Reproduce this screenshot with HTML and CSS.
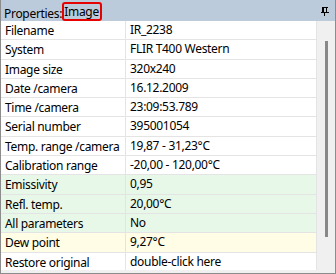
FILE: index.html
```html
<!DOCTYPE html>
<html lang="en">

<head>
    <meta charset="UTF-8">
    <title>Properties</title>
    <link rel="stylesheet" href="styles.css">
</head>

<body>
    <div class="panel">
        <div class="header">
            <span class="title">Properties:<span class="mark">Image</span></span>
            <svg class="pin" width="8" height="9" viewBox="0 0 8 9">
                <path d="M1 0h6v1H6v4H5V1H3v4H1V1H1z" fill="#000" />
                <rect x="0" y="5" width="8" height="1" fill="#000" />
                <rect x="3" y="6" width="1" height="3" fill="#000" />
            </svg>
        </div>
        <div class="content">
            <div class="grid">
                <div class="row"><span class="key">Filename</span><span class="val">IR_2238</span></div>
                <div class="row"><span class="key">System</span><span class="val">FLIR T400 Western</span></div>
                <div class="row"><span class="key">Image size</span><span class="val">320x240</span></div>
                <div class="row"><span class="key">Date /camera</span><span class="val">16.12.2009</span></div>
                <div class="row"><span class="key">Time /camera</span><span class="val">23:09:53.789</span></div>
                <div class="row"><span class="key">Serial number</span><span class="val">395001054</span></div>
                <div class="row"><span class="key">Temp. range /camera</span><span class="val">19,87 - 31,23°C</span></div>
                <div class="row"><span class="key">Calibration range</span><span class="val">-20,00 - 120,00°C</span></div>
                <div class="row green"><span class="key">Emissivity</span><span class="val">0,95</span></div>
                <div class="row green"><span class="key">Refl. temp.</span><span class="val">20,00°C</span></div>
                <div class="row green"><span class="key">All parameters</span><span class="val">No</span></div>
                <div class="row yellow"><span class="key">Dew point</span><span class="val">9,27°C</span></div>
                <div class="row"><span class="key">Restore original</span><span class="val">double-click here</span></div>
            </div>
            <div class="scrollbar">
                <div class="thumb"></div>
            </div>
        </div>
    </div>
</body>

</html>
```

FILE: styles.css
```css
body {
    margin: 0;
    padding: 0;
    background-color: #f0f0f0;
    font-family: "Noto Sans", "Open Sans", sans-serif;
    font-size: 12px;
    letter-spacing: -0.3px;
    color: #000;
}

.panel {
    width: 336px;
    height: 274px;
    box-sizing: border-box;
    border: 1px solid #8c8c8c;
    border-top: none;
    background-color: #f0f0f0;
    display: flex;
    flex-direction: column;
}

.header {
    height: 21px;
    flex: none;
    background-color: #bccbdb;
    display: flex;
    align-items: flex-end;
    justify-content: space-between;
    padding: 0 6px 0 3px;
}

.title {
    line-height: 15px;
    display: flex;
    align-items: flex-end;
}

.mark {
    display: inline-block;
    border: 2px solid #e60000;
    border-radius: 3px;
    padding: 0 1px 0 0;
    margin-left: 0;
    line-height: 15px;
}

.pin {
    display: block;
    align-self: center;
    margin-top: 1px;
}

.content {
    display: flex;
    height: 249px;
    flex: none;
}

.grid {
    width: 315px;
    height: 249px;
    overflow: hidden;
    background-color: #fff;
    border-right: 1px solid #e4e4e4;
}

.row {
    display: flex;
    height: 19.3px;
    box-sizing: border-box;
    border-bottom: 1px solid #e4e4e4;
    line-height: 18px;
}

.key {
    width: 125px;
    flex: none;
    padding: 1px 0 0 4px;
    box-sizing: border-box;
    border-right: 1px solid #e4e4e4;
    white-space: nowrap;
}

.val {
    padding: 0 0 0 4px;
    white-space: nowrap;
}

.row.green {
    background-color: #e8f8e8;
}

.row.yellow {
    background-color: #fffde6;
}

.scrollbar {
    flex: 1;
    display: flex;
    justify-content: center;
    padding-top: 20px;
}

.thumb {
    width: 3px;
    height: 196px;
    background-color: #888;
    margin-left: 1px;
}
```
